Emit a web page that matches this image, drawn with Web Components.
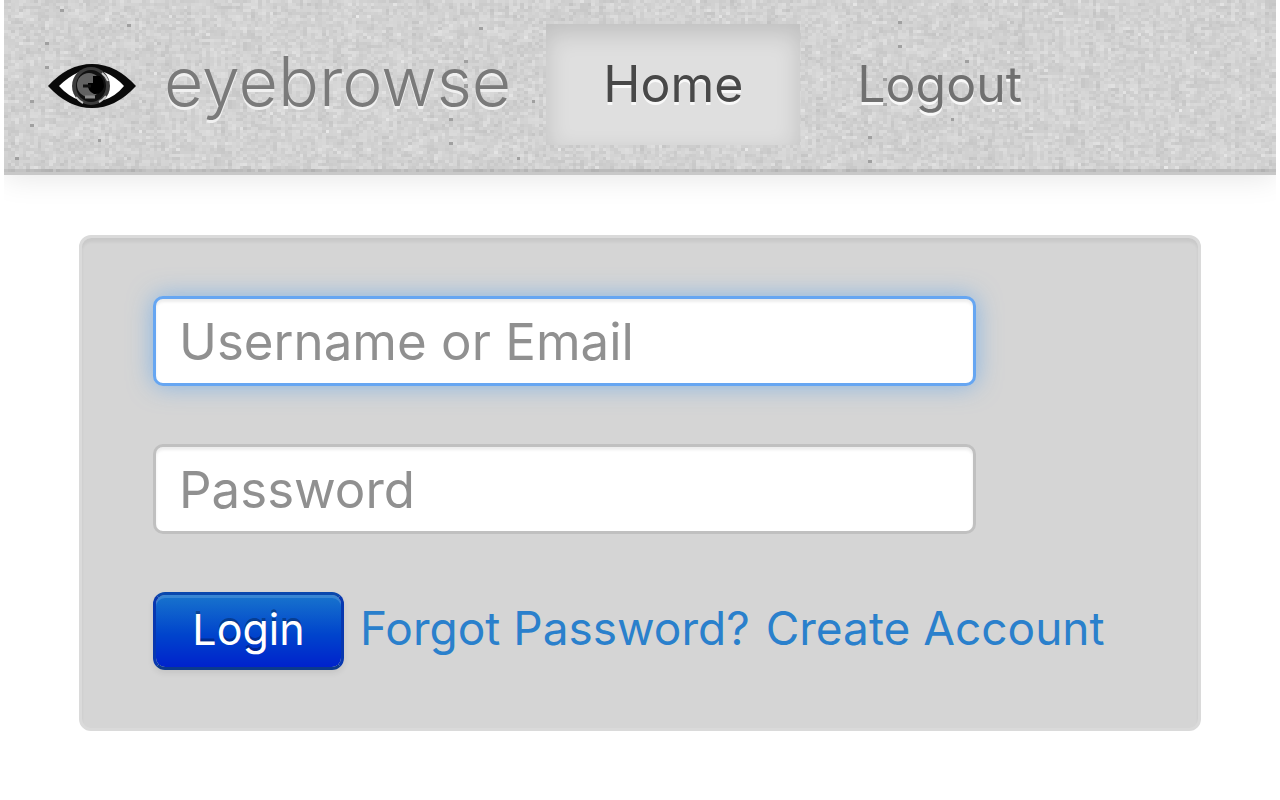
<!DOCTYPE html>
<html lang="en">
<head>
<meta charset="utf-8">
<meta name="viewport" content="width=device-width, initial-scale=1">
<title>eyebrowse</title>
<style>
  body { margin: 0 4px; background: #fff; font-family: Inter, "Liberation Sans", Helvetica, sans-serif; color: #444; }
</style>
</head>
<body>
<eb-navbar>
  <eb-brand slot="brand">eyebrowse</eb-brand>
  <eb-nav-item href="#home" active>Home</eb-nav-item>
  <eb-nav-item href="#logout">Logout</eb-nav-item>
</eb-navbar>
<main>
  <eb-login-panel>
    <eb-field type="text" label="Username or Email" highlighted></eb-field>
    <eb-field type="password" label="Password"></eb-field>
    <eb-button slot="actions">Login</eb-button>
    <eb-link slot="actions" href="#forgot">Forgot Password?</eb-link>
    <eb-link slot="actions" href="#create">Create Account</eb-link>
  </eb-login-panel>
</main>
<script>
class EbElement extends HTMLElement {
  constructor() {
    super();
    this.attachShadow({ mode: 'open' }).innerHTML = this.constructor.markup;
  }
  $(selector) { return this.shadowRoot.querySelector(selector); }
}

/* Woven paper background, drawn cell by cell from a seeded generator. */
class EbTexture extends EbElement {
  static markup = `
    <style>
      :host { display: block; overflow: hidden; }
      canvas { display: block; width: 100%; height: 100%; image-rendering: pixelated; }
    </style>
    <canvas width="340" height="57"></canvas>`;
  connectedCallback() {
    const canvas = this.$('canvas');
    const ctx = canvas.getContext('2d');
    let seed = 7331;
    const rnd = () => (seed = (seed * 1103515245 + 12345) % 2147483648) / 2147483648;
    const { width, height } = canvas;
    const column = Array.from({ length: width }, () => rnd() * 10 - 5);
    for (let y = 0; y < height; y++) {
      let run = 0;
      for (let x = 0; x < width; x++) {
        if (rnd() < 0.5) run = rnd() * 10 - 5;
        if (rnd() < 0.35) column[x] = rnd() * 10 - 5;
        let v = 210 + run + column[x] + rnd() * 14 - 7;
        const r = rnd();
        if (r < 0.02) v += 9;
        if (r > 0.9994) v = 160;
        v = Math.round(v);
        ctx.fillStyle = `rgb(${v},${v},${v})`;
        ctx.fillRect(x, y, 1, 1);
      }
    }
  }
}
customElements.define('eb-texture', EbTexture);

class EbNavbar extends EbElement {
  static markup = `
    <style>
      :host { display: block; position: relative; border-bottom: 3px solid #c8c8c8; box-shadow: 0 3px 28px rgba(0,0,0,.1); background: #d2d2d2; }
      eb-texture { position: absolute; inset: 0; }
      .edge { position: absolute; inset: 0; box-shadow: inset 0 -3px 0 rgba(0,0,0,.1); }
      nav { position: relative; display: flex; align-items: flex-start; gap: 35px; padding: 24px 0 27px 44px; }
      .items { display: flex; }
    </style>
    <eb-texture></eb-texture>
    <div class="edge"></div>
    <nav><slot name="brand"></slot><div class="items"><slot></slot></div></nav>`;
}
customElements.define('eb-navbar', EbNavbar);

class EbBrand extends EbElement {
  static markup = `
    <style>
      :host { display: block; }
      a { display: flex; align-items: center; gap: 28px; height: 121px; color: #7a7a7a; text-decoration: none; font-size: 68px; line-height: 80px; font-weight: 300; text-shadow: 0 3px 0 #f0f0f0; }
      svg { display: block; width: 88px; height: 46px; flex: none; }
      span { padding-bottom: 8px; }
    </style>
    <a href="#home">
      <svg viewBox="0 0 88 46" aria-hidden="true">
        <ellipse cx="43" cy="24" rx="22" ry="22" fill="#8b8b8b"/>
        <path d="M0 24 Q20 2 44 2 Q68 2 88 24 Q68 46 44 46 Q20 46 0 24Z" fill="#0a0a0a"/>
        <path d="M11 24 Q20 15 31 10 L31 38 Q20 34 11 24Z M76 24 Q68 15 56 10 L56 38 Q68 34 76 24Z" fill="#fff"/>
        <ellipse cx="43" cy="24" rx="19" ry="19" fill="#3c3c3c"/>
        <ellipse cx="43" cy="24" rx="15" ry="16" fill="#111"/>
        <path d="M28 35 Q31 39 35 41 M51 40 Q55 38 58 34 M54 11 Q58 14 60 19" fill="none" stroke="#d0d0d0" stroke-width="2"/>
        <ellipse cx="41" cy="23" rx="12" ry="12" fill="#626262"/>
        <path d="M45 14 H52 Q56 18 56 25 Q53 33 46 32 Q39 29 40 21 L45 21Z" fill="#000"/>
        <path d="M35 24 H43" stroke="#111" stroke-width="3"/>
        <path d="M37 35 H47" stroke="#8a8a8a" stroke-width="3"/>
      </svg>
      <span><slot></slot></span>
    </a>`;
}
customElements.define('eb-brand', EbBrand);

class EbNavItem extends EbElement {
  static markup = `
    <style>
      :host { display: block; }
      a { display: block; padding: 0 57px; color: #707070; font-size: 50px; line-height: 121px; font-weight: 400; text-decoration: none; text-shadow: 0 3px 0 #f8f8f8; }
      :host([active]) a { color: #484848; background: #dfdfdf; box-shadow: inset 0 9px 24px rgba(0,0,0,.15); }
    </style>
    <a><slot></slot></a>`;
  connectedCallback() {
    const link = this.$('a');
    link.href = this.getAttribute('href');
    if (this.hasAttribute('active')) link.setAttribute('aria-current', 'page');
  }
}
customElements.define('eb-nav-item', EbNavItem);

class EbLoginPanel extends EbElement {
  static markup = `
    <style>
      :host { display: block; margin: 60px 75px; }
      form { display: grid; gap: 58px; padding: 58px 71px; border: 3px solid #dadada; border-radius: 12px; background: #d5d5d5; box-shadow: inset 0 4px 3px rgba(0,0,0,.06); }
      .fields { display: grid; gap: 58px; max-width: 823px; }
      .actions { display: flex; align-items: center; gap: 16px; white-space: nowrap; }
    </style>
    <form>
      <div class="fields"><slot></slot></div>
      <div class="actions"><slot name="actions"></slot></div>
    </form>`;
}
customElements.define('eb-login-panel', EbLoginPanel);

class EbField extends EbElement {
  static markup = `
    <style>
      :host { display: block; }
      input { display: block; box-sizing: border-box; width: 100%; height: 90px; margin: 0; padding: 0 23px; border: 3px solid #c0c0c0; border-radius: 10px; background: #fff; color: #555; font: 400 51px/60px Inter, "Liberation Sans", sans-serif; box-shadow: inset 0 3px 3px rgba(0,0,0,.075); outline: none; }
      input::placeholder { color: #909090; opacity: 1; }
      :host([highlighted]) input, input:focus { border-color: #66a6f2; box-shadow: inset 0 3px 3px rgba(0,0,0,.075), 0 0 24px rgba(82,158,236,.6); }
    </style>
    <input>`;
  connectedCallback() {
    const input = this.$('input');
    const label = this.getAttribute('label');
    input.type = this.getAttribute('type');
    input.placeholder = label;
    input.setAttribute('aria-label', label);
  }
}
customElements.define('eb-field', EbField);

class EbButton extends EbElement {
  static markup = `
    <style>
      :host { display: block; }
      button { display: block; box-sizing: border-box; min-width: 191px; height: 78px; padding: 0 36px 4px; border: 3px solid; border-color: #0a48ad #0838b0 #0b3a8c; border-radius: 12px; background: linear-gradient(#1874cd, #0044cc 55%, #0022cc) padding-box; color: #fff; font: 400 43px/60px Inter, "Liberation Sans", sans-serif; text-shadow: 0 -3px 0 rgba(0,0,0,.3); box-shadow: inset 0 3px 0 rgba(255,255,255,.14), 0 3px 6px rgba(0,0,0,.08); cursor: pointer; }
    </style>
    <button type="button"><slot></slot></button>`;
}
customElements.define('eb-button', EbButton);

class EbLink extends EbElement {
  static markup = `
    <style>
      :host { display: block; padding-bottom: 6px; }
      a { color: #2a80cc; font-size: 46px; line-height: 60px; font-weight: 400; text-decoration: none; }
      a:hover { text-decoration: underline; }
    </style>
    <a><slot></slot></a>`;
  connectedCallback() { this.$('a').href = this.getAttribute('href'); }
}
customElements.define('eb-link', EbLink);
</script>
</body>
</html>
